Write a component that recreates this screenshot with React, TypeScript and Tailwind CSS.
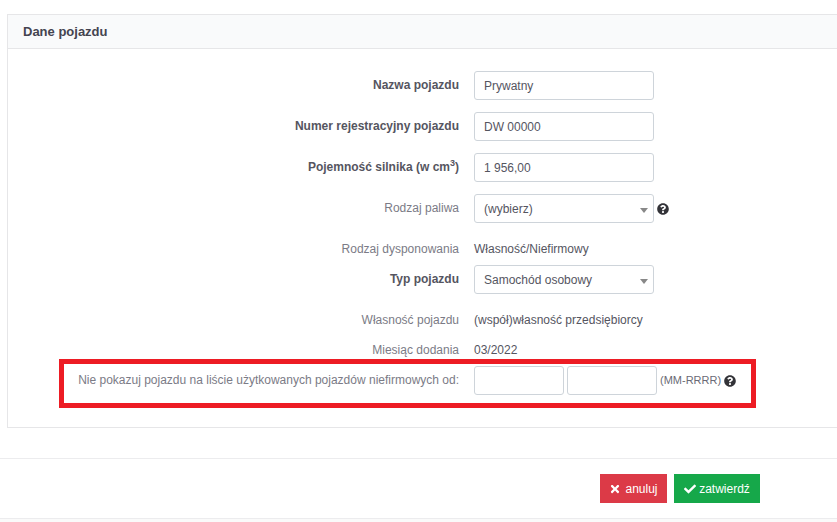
import React from "react";
import { FaCheck, FaQuestionCircle, FaTimes } from "react-icons/fa";

const Label: React.FC<{ bold?: boolean; raised?: boolean; children: React.ReactNode }> = ({ bold, raised, children }) => (
  <div className={`w-[466px] shrink-0 pr-[15px] text-right ${raised ? "mb-[2px]" : ""} ${bold ? "font-bold text-[#555560]" : "text-[#7b7b86]"}`}>
    {children}
  </div>
);

const Input: React.FC<{ value?: string; small?: boolean }> = ({ value, small }) => (
  <input
    readOnly
    value={value ?? ""}
    className={`h-[29px] rounded-[3px] border border-[#ced4da] bg-white px-[9px] text-[#55555f] outline-none ${small ? "w-[90px]" : "w-[180px]"}`}
  />
);

const Select: React.FC<{ value: string }> = ({ value }) => (
  <div className="flex h-[29px] w-[180px] items-center justify-between rounded-[3px] border border-[#ced4da] bg-white pl-[9px] pr-[5px] text-[#55555f]">
    <span>{value}</span>
    <span className="mt-[3px] h-0 w-0 border-x-[4px] border-t-[5px] border-x-transparent border-t-[#888888]" />
  </div>
);

export default function App() {
  return (
    <div className="relative h-[522px] w-[837px] overflow-hidden bg-white font-['Liberation_Sans',Arial,sans-serif] text-[12px] text-[#55555f]">
      <div className="pl-[7px] pt-[14px]">
        <div className="h-[414px] border-y border-l border-[#e6e6e8]">
          <div className="flex h-[34px] items-center border-b border-[#e6e6e8] bg-[#f9fafb] pl-[15px] text-[13px] font-bold text-[#444450]">
            Dane pojazdu
          </div>
          <div className="flex flex-col pt-[22px]">
            <div className="flex items-center">
              <Label bold raised>Nazwa pojazdu</Label>
              <Input value="Prywatny" />
            </div>
            <div className="mt-[12px] flex items-center">
              <Label bold raised>Numer rejestracyjny pojazdu</Label>
              <Input value="DW 00000" />
            </div>
            <div className="mt-[12px] flex items-center">
              <Label bold raised>
                Pojemność silnika (w cm<sup className="text-[9px]">3</sup>)
              </Label>
              <Input value="1 956,00" />
            </div>
            <div className="mt-[12px] flex items-center">
              <Label raised>Rodzaj paliwa</Label>
              <Select value="(wybierz)" />
              <FaQuestionCircle className="ml-[3px] text-[12px] text-[#333338]" />
            </div>
            <div className="mt-[16px] flex h-[20px] items-center">
              <Label>Rodzaj dysponowania</Label>
              <span>Własność/Niefirmowy</span>
            </div>
            <div className="mt-[6px] flex items-center">
              <Label bold raised>Typ pojazdu</Label>
              <Select value="Samochód osobowy" />
            </div>
            <div className="mt-[16px] flex h-[20px] items-center">
              <Label>Własność pojazdu</Label>
              <span>(współ)własność przedsiębiorcy</span>
            </div>
            <div className="mt-[10px] flex h-[20px] items-center">
              <Label>Miesiąc dodania</Label>
              <span>03/2022</span>
            </div>
            <div className="mt-[6px] flex items-center">
              <Label raised>Nie pokazuj pojazdu na liście użytkowanych pojazdów niefirmowych od:</Label>
              <Input small />
              <div className="ml-[3px]">
                <Input small />
              </div>
              <span className="ml-[3px] text-[11px] text-[#6a6a75]">(MM-RRRR)</span>
              <FaQuestionCircle className="ml-[3px] text-[12px] text-[#333338]" />
            </div>
          </div>
        </div>
      </div>
      <div className="mt-[30px] h-[61px] border-y border-[#ececee] pt-[15px]">
        <div className="flex justify-end gap-[7px] pr-[77px]">
          <button className="flex h-[29px] w-[67px] items-center justify-center gap-[4px] bg-[#dc3a47] text-white">
            <FaTimes className="text-[12px]" />
            anuluj
          </button>
          <button className="flex h-[29px] w-[86px] items-center justify-center gap-[3px] bg-[#16a84a] text-white">
            <FaCheck className="text-[12px]" />
            zatwierdź
          </button>
        </div>
      </div>
      <div className="h-[4px] bg-[#fafafa]" />
      <div className="absolute left-[59px] top-[359px] h-[49px] w-[697px] border-[5px] border-[#ed1c24]" />
    </div>
  );
}
